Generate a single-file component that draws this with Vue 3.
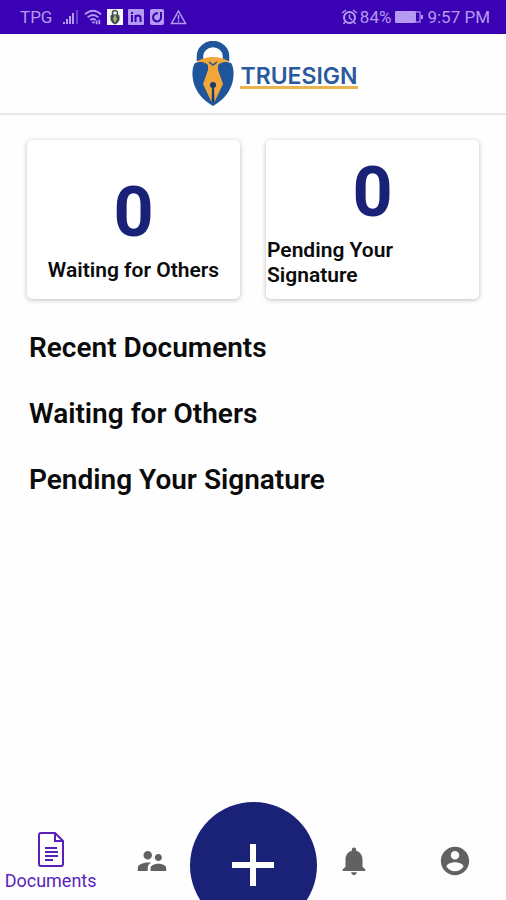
<template>
  <div class="app">
    <div class="status-bar">
      <div class="status-group">
        <span class="carrier">TPG</span>
        <svg width="17" height="18" viewBox="0 0 17 18">
          <path d="M1 14h2v2H1zM4 11h2v5H4zM7 8h2v8H7zM10 5h2v11h-2z" fill="#b49af0" />
          <path d="M14 2h2v14h-2z" fill="#6741cd" />
        </svg>
        <svg width="18" height="18" viewBox="0 0 20 18" fill="none" stroke="#b49af0" stroke-width="2">
          <path d="M1 6Q10-2 19 6M4 9.500Q10 4 16 9.500M7 12.500Q10 10 13 12.500" />
          <path d="M9 15h3M14 13v4M17 12v5" />
        </svg>
        <svg width="16" height="18" viewBox="0 0 16 18">
          <path d="M0 1h16v16H0z" fill="#f6f8f4" />
          <path d="M5.500 8V5a2.500 2.500 0 0 1 5 0v3" fill="none" stroke="#3d4f56" stroke-width="1.500" />
          <path d="M3.500 7.500Q8 5 12.500 7.500V12Q11 15.500 8 16.500Q5 15.500 3.500 12z" fill="#3d4f56" />
          <path d="M8 6l2 5-2 4-2-4z" fill="#b8ad6c" />
        </svg>
        <svg width="16" height="18" viewBox="0 0 16 18">
          <rect y="1" width="16" height="16" rx="1" fill="#b49af0" />
          <path d="M4 7v7M4 4v2M7.500 14V7M7.500 10q0-2.500 2.500-2.500T12.500 10v4" fill="none" stroke="#3b02b4" stroke-width="2" />
        </svg>
        <svg width="16" height="18" viewBox="0 0 16 18">
          <rect x="1" y="1" width="14" height="16" rx="2" fill="#b49af0" />
          <path d="M9 5.500A4 4 0 1 0 12 9V4" fill="none" stroke="#3b02b4" stroke-width="2" />
        </svg>
        <svg width="17" height="18" viewBox="0 0 17 18" fill="none" stroke="#b49af0" stroke-width="1.500">
          <path d="M8.500 3L15.500 15.500h-14zM8.500 7v4.500M8.500 12.500V14" />
        </svg>
      </div>
      <div class="status-group right">
        <svg width="17" height="18" viewBox="0 0 17 18" fill="none" stroke="#b49af0" stroke-width="2">
          <circle cx="8.500" cy="9.500" r="5.500" />
          <path d="M1 5l4-3M16 5l-4-3M8.500 6.500v3.500l2.500 2M4 14l-1.500 2M13 14l1.500 2" stroke-width="1.500" />
        </svg>
        <span>84%</span>
        <svg class="battery" width="28" height="18" viewBox="0 0 28 18">
          <rect x="0" y="3" width="21" height="12" rx="1" fill="#b49af0" />
          <path d="M21 4h4v10h-4" fill="none" stroke="#9a79e5" stroke-width="1.500" />
          <path d="M26 7h2v4h-2z" fill="#b49af0" />
        </svg>
        <span>9:57 PM</span>
      </div>
    </div>

    <header class="header">
      <svg width="42" height="66" viewBox="0 0 42 66">
        <path d="M8 20V15a13 12 0 0 1 26 0v5" fill="none" stroke="#1f559b" stroke-width="6.500" />
        <path d="M3 22Q21 15 39 22Q42 26 41.500 35Q40 54 21 65Q2 54 .5 35Q0 26 3 22z" fill="#1f559b" />
        <path d="M4 21Q12 16 21 16T38 21Q31 20 26 24L26 29L31 43L22.500 61L22 46h-2L19.500 61L11 43L16 29V24Q11 20 4 21z" fill="#f2a63a" />
        <path d="M17 21l4 3 4-3" fill="none" stroke="#1f559b" stroke-width="1.500" />
        <circle cx="21" cy="44" r="3" fill="#17396d" />
        <path d="M21 46v15" stroke="#17396d" stroke-width="2" />
      </svg>
      <span class="brand">TRUESIGN</span>
    </header>

    <main class="content">
      <section class="cards">
        <div v-for="card in cards" :key="card.label" class="card" :class="{ tall: card.twoLines }">
          <span class="count">{{ card.count }}</span>
          <span class="label">{{ card.label }}</span>
        </div>
      </section>
      <h2 v-for="title in sections" :key="title">{{ title }}</h2>
    </main>

    <nav class="tab-bar">
      <a href="#documents" class="tab active">
        <svg width="28" height="36" viewBox="0 0 28 36" fill="none" stroke="#5a1fb8" stroke-width="2">
          <path d="M4 1h14l8 8v23a2 2 0 0 1-2 2H4a2 2 0 0 1-2-2V3a2 2 0 0 1 2-2z" />
          <path d="M18 1v8h8" />
          <path d="M8 16h12M8 20h13M8 24h13M8 28h8" />
        </svg>
        <span>Documents</span>
      </a>
      <a href="#contacts" class="tab" aria-label="Contacts">
        <svg width="34" height="34" viewBox="0 0 24 24" fill="#616161">
          <path d="M16.500 12c1.380 0 2.490-1.120 2.490-2.500S17.880 7 16.500 7C15.120 7 14 8.120 14 9.500s1.120 2.500 2.500 2.500zM9 11c1.660 0 2.990-1.340 2.990-3S10.660 5 9 5C7.340 5 6 6.340 6 8s1.340 3 3 3zm7.500 3c-1.830 0-5.500.920-5.500 2.750V19h11v-2.250c0-1.830-3.670-2.750-5.500-2.750zM9 13c-2.330 0-7 1.170-7 3.500V19h7v-2.250c0-.850.330-2.340 2.370-3.470C10.500 13.100 9.660 13 9 13z" />
        </svg>
      </a>
      <div class="tab">
        <button class="add" aria-label="Add document">
          <svg width="42" height="42" viewBox="0 0 42 42">
            <path d="M21 0v42M0 21h42" stroke="#fff" stroke-width="6" />
          </svg>
        </button>
      </div>
      <a href="#notifications" class="tab" aria-label="Notifications">
        <svg width="34" height="34" viewBox="0 0 24 24" fill="#616161">
          <path d="M12 22c1.100 0 2-.9 2-2h-4c0 1.100.890 2 2 2zm6-6v-5c0-3.070-1.640-5.640-4.500-6.320V4c0-.830-.670-1.500-1.500-1.500s-1.500.670-1.500 1.500v.680C7.630 5.360 6 7.920 6 11v5l-2 2v1h16v-1l-2-2z" />
        </svg>
      </a>
      <a href="#account" class="tab" aria-label="Account">
        <svg width="34" height="34" viewBox="0 0 24 24" fill="#616161">
          <path d="M12 2C6.480 2 2 6.480 2 12s4.480 10 10 10 10-4.480 10-10S17.520 2 12 2zm0 3c1.660 0 3 1.340 3 3s-1.340 3-3 3-3-1.340-3-3 1.340-3 3-3zm0 14.200c-2.500 0-4.710-1.280-6-3.220.030-1.990 4-3.080 6-3.080 1.990 0 5.970 1.090 6 3.080-1.290 1.940-3.500 3.220-6 3.220z" />
        </svg>
      </a>
    </nav>
  </div>
</template>

<script setup>
import { ref } from 'vue'

const cards = ref([
  { label: 'Waiting for Others', count: 0, twoLines: false },
  { label: 'Pending Your Signature', count: 0, twoLines: true }
])

const sections = ['Recent Documents', 'Waiting for Others', 'Pending Your Signature']
</script>

<style>
body {
  margin: 0;
  background-color: #fefefe;
}
</style>

<style scoped>
.app {
  display: flex;
  flex-direction: column;
  height: 100vh;
  overflow: hidden;
  font-family: Roboto, "Liberation Sans", sans-serif;
  color: #0b0b0b;
}

.status-bar {
  display: flex;
  justify-content: space-between;
  align-items: center;
  height: 34px;
  flex-shrink: 0;
  padding: 0 16px 0 20px;
  background-color: #3b02b4;
  color: #b49af0;
  font-size: 17px;
}

.status-group {
  display: flex;
  align-items: center;
  gap: 5px;
}

.carrier {
  margin-right: 5px;
}

.status-group.right {
  gap: 2px;
}

.battery {
  margin: 0 2px;
}

.header {
  display: flex;
  justify-content: center;
  align-items: center;
  gap: 6px;
  height: 79px;
  flex-shrink: 0;
  padding-left: 44px;
  border-bottom: 2px solid #e9e9e9;
}

.brand {
  padding-top: 8px;
  font-family: Inter, "Liberation Sans", sans-serif;
  font-size: 23px;
  line-height: 20px;
  font-weight: 600;
  color: #2b5a9c;
  border-bottom: 3px solid #e9b44f;
}

.content {
  flex: 1;
  padding: 25px 27px 0;
}

.cards {
  display: grid;
  grid-template-columns: 1fr 1fr;
  gap: 26px;
  margin-bottom: 32px;
}

.card {
  display: flex;
  flex-direction: column;
  align-items: center;
  justify-content: flex-end;
  box-sizing: border-box;
  height: 159px;
  padding-bottom: 16px;
  border-radius: 5px;
  background-color: #fff;
  box-shadow: 0 1px 5px rgba(0, 0, 0, 0.26);
}

.card.tall {
  padding-bottom: 11px;
}

.count {
  font-size: 70px;
  line-height: 92px;
  font-weight: 700;
  color: #1a2277;
}

.label {
  padding: 0 1px;
  font-size: 21px;
  line-height: 25px;
  font-weight: 600;
}

h2 {
  margin: 0 0 32px;
  padding-left: 2px;
  font-size: 28px;
  line-height: 34px;
  font-weight: 600;
}

.tab-bar {
  display: grid;
  grid-template-columns: repeat(5, minmax(0, 1fr));
  grid-template-rows: 78px;
  height: 78px;
  flex-shrink: 0;
}

.tab {
  display: flex;
  flex-direction: column;
  align-items: center;
  justify-content: center;
  color: #5a1fb8;
  font-size: 18px;
  line-height: 20px;
  text-decoration: none;
}

.tab.active {
  gap: 3px;
}

.add {
  display: flex;
  align-items: center;
  justify-content: center;
  width: 127px;
  height: 127px;
  margin-top: 8px;
  flex-shrink: 0;
  padding: 0;
  border: none;
  border-radius: 50%;
  background-color: #1a2277;
}
</style>
